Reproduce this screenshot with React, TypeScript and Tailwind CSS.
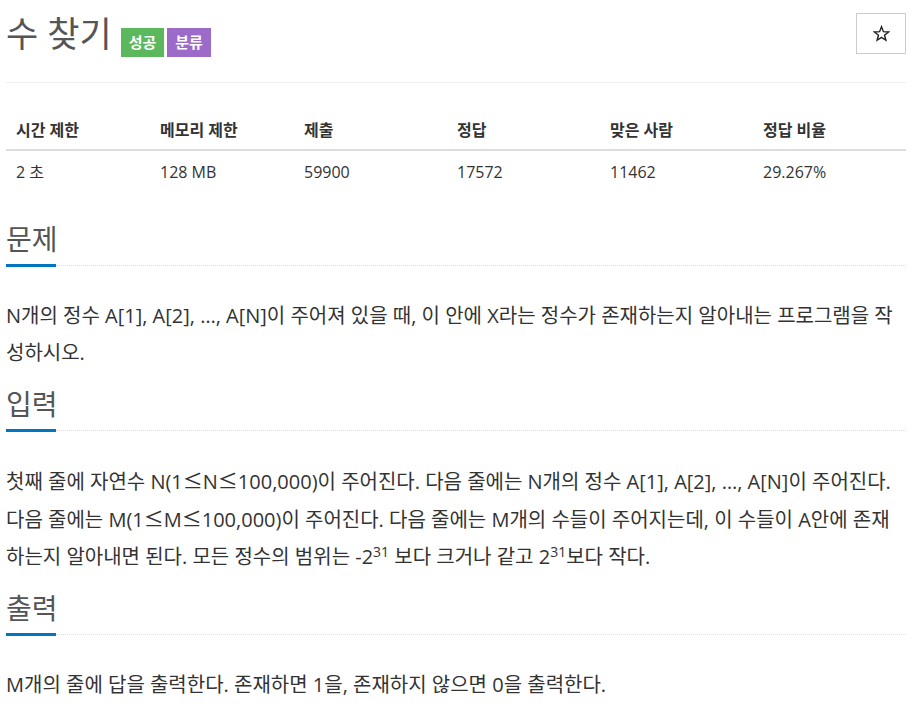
const font = { fontFamily: '"Open Sans", "Noto Sans CJK KR", sans-serif' };

const stats = [
  { label: "시간 제한", value: "2 초", w: "w-[144px]" },
  { label: "메모리 제한", value: "128 MB", w: "w-[144px]" },
  { label: "제출", value: "59900", w: "w-[153px]" },
  { label: "정답", value: "17572", w: "w-[153px]" },
  { label: "맞은 사람", value: "11462", w: "w-[153px]" },
  { label: "정답 비율", value: "29.267%", w: "w-[153px]" },
];

function Headline({ title, className }: { title: string; className: string }) {
  return (
    <div className={"flex items-end " + className}>
      <h2 className="border-b-[3px] border-[#0076c0] pb-[8px] text-[28px] leading-[34px] font-normal text-[#555] w-[50px] whitespace-nowrap">
        {title}
      </h2>
      <div className="flex-1 mb-[1px] border-b border-dotted border-[#ddd]" />
    </div>
  );
}

function Le() {
  return <span className="font-['Noto_Sans_CJK_KR',sans-serif]">≤</span>;
}

export default function App() {
  return (
    <div className="w-[900px] mx-[6px] text-[#333] bg-white" style={font}>
      <div className="flex justify-between items-start pt-[13px] pb-[25px] border-b border-[#eee]">
        <div className="flex items-start">
          <h1 className="text-[35px] leading-[42px] font-normal text-[#555]">수 찾기</h1>
          <span className="ml-[9px] mt-[15px] h-[29px] px-[8px] flex items-center bg-[#5cb85c] text-white text-[15px] font-bold">
            성공
          </span>
          <span className="ml-[3px] mt-[15px] h-[29px] px-[8px] flex items-center bg-[#9c6ac9] text-white text-[15px] font-bold">
            분류
          </span>
        </div>
        <button className="w-[50px] h-[41px] border border-[#ccc] bg-white flex items-center justify-center">
          <svg width="17" height="17" viewBox="0 0 24 24" fill="none" stroke="#222" strokeWidth="2" strokeLinejoin="miter">
            <path d="M12 2.5l2.7 6.9 7.3.4-5.7 4.6 1.9 7.1L12 17.5l-6.2 4 1.9-7.1L2 9.8l7.3-.4z" />
          </svg>
        </button>
      </div>

      <table className="mt-[28px] w-[900px] border-collapse text-[16px]">
        <thead>
          <tr className="border-b-2 border-[#ddd]">
            {stats.map((s) => (
              <th key={s.label} className={s.w + " text-left font-bold px-[10px] py-[8px] leading-[22px]"}>
                {s.label}
              </th>
            ))}
          </tr>
        </thead>
        <tbody>
          <tr>
            {stats.map((s) => (
              <td key={s.label} className="px-[10px] py-[10px] leading-[22px]">
                {s.value}
              </td>
            ))}
          </tr>
        </tbody>
      </table>

      <Headline title="문제" className="mt-[29px]" />
      <p className="mt-[30px] text-[20px] leading-[37px]">
        N개의 정수 A[1], A[2], …, A[N]이 주어져 있을 때, 이 안에 X라는 정수가 존재하는지 알아내는 프로그램을 작성하시오.
      </p>

      <Headline title="입력" className="mt-[16px]" />
      <p className="mt-[30px] text-[20px] leading-[37px]">
        첫째 줄에 자연수 N(1<Le />N<Le />100,000)이 주어진다. 다음 줄에는 N개의 정수 A[1], A[2], …, A[N]이 주어진다. 다음 줄에는 M(1<Le />M<Le />100,000)이 주어진다. 다음 줄에는 M개의 수들이 주어지는데, 이 수들이 A안에 존재하는지 알아내면 된다. 모든 정수의 범위는 -2
        <sup className="text-[14px]">31</sup> 보다 크거나 같고 2<sup className="text-[14px]">31</sup>보다 작다.
      </p>

      <Headline title="출력" className="mt-[16px]" />
      <p className="mt-[30px] text-[20px] leading-[37px]">
        M개의 줄에 답을 출력한다. 존재하면 1을, 존재하지 않으면 0을 출력한다.
      </p>
    </div>
  );
}
